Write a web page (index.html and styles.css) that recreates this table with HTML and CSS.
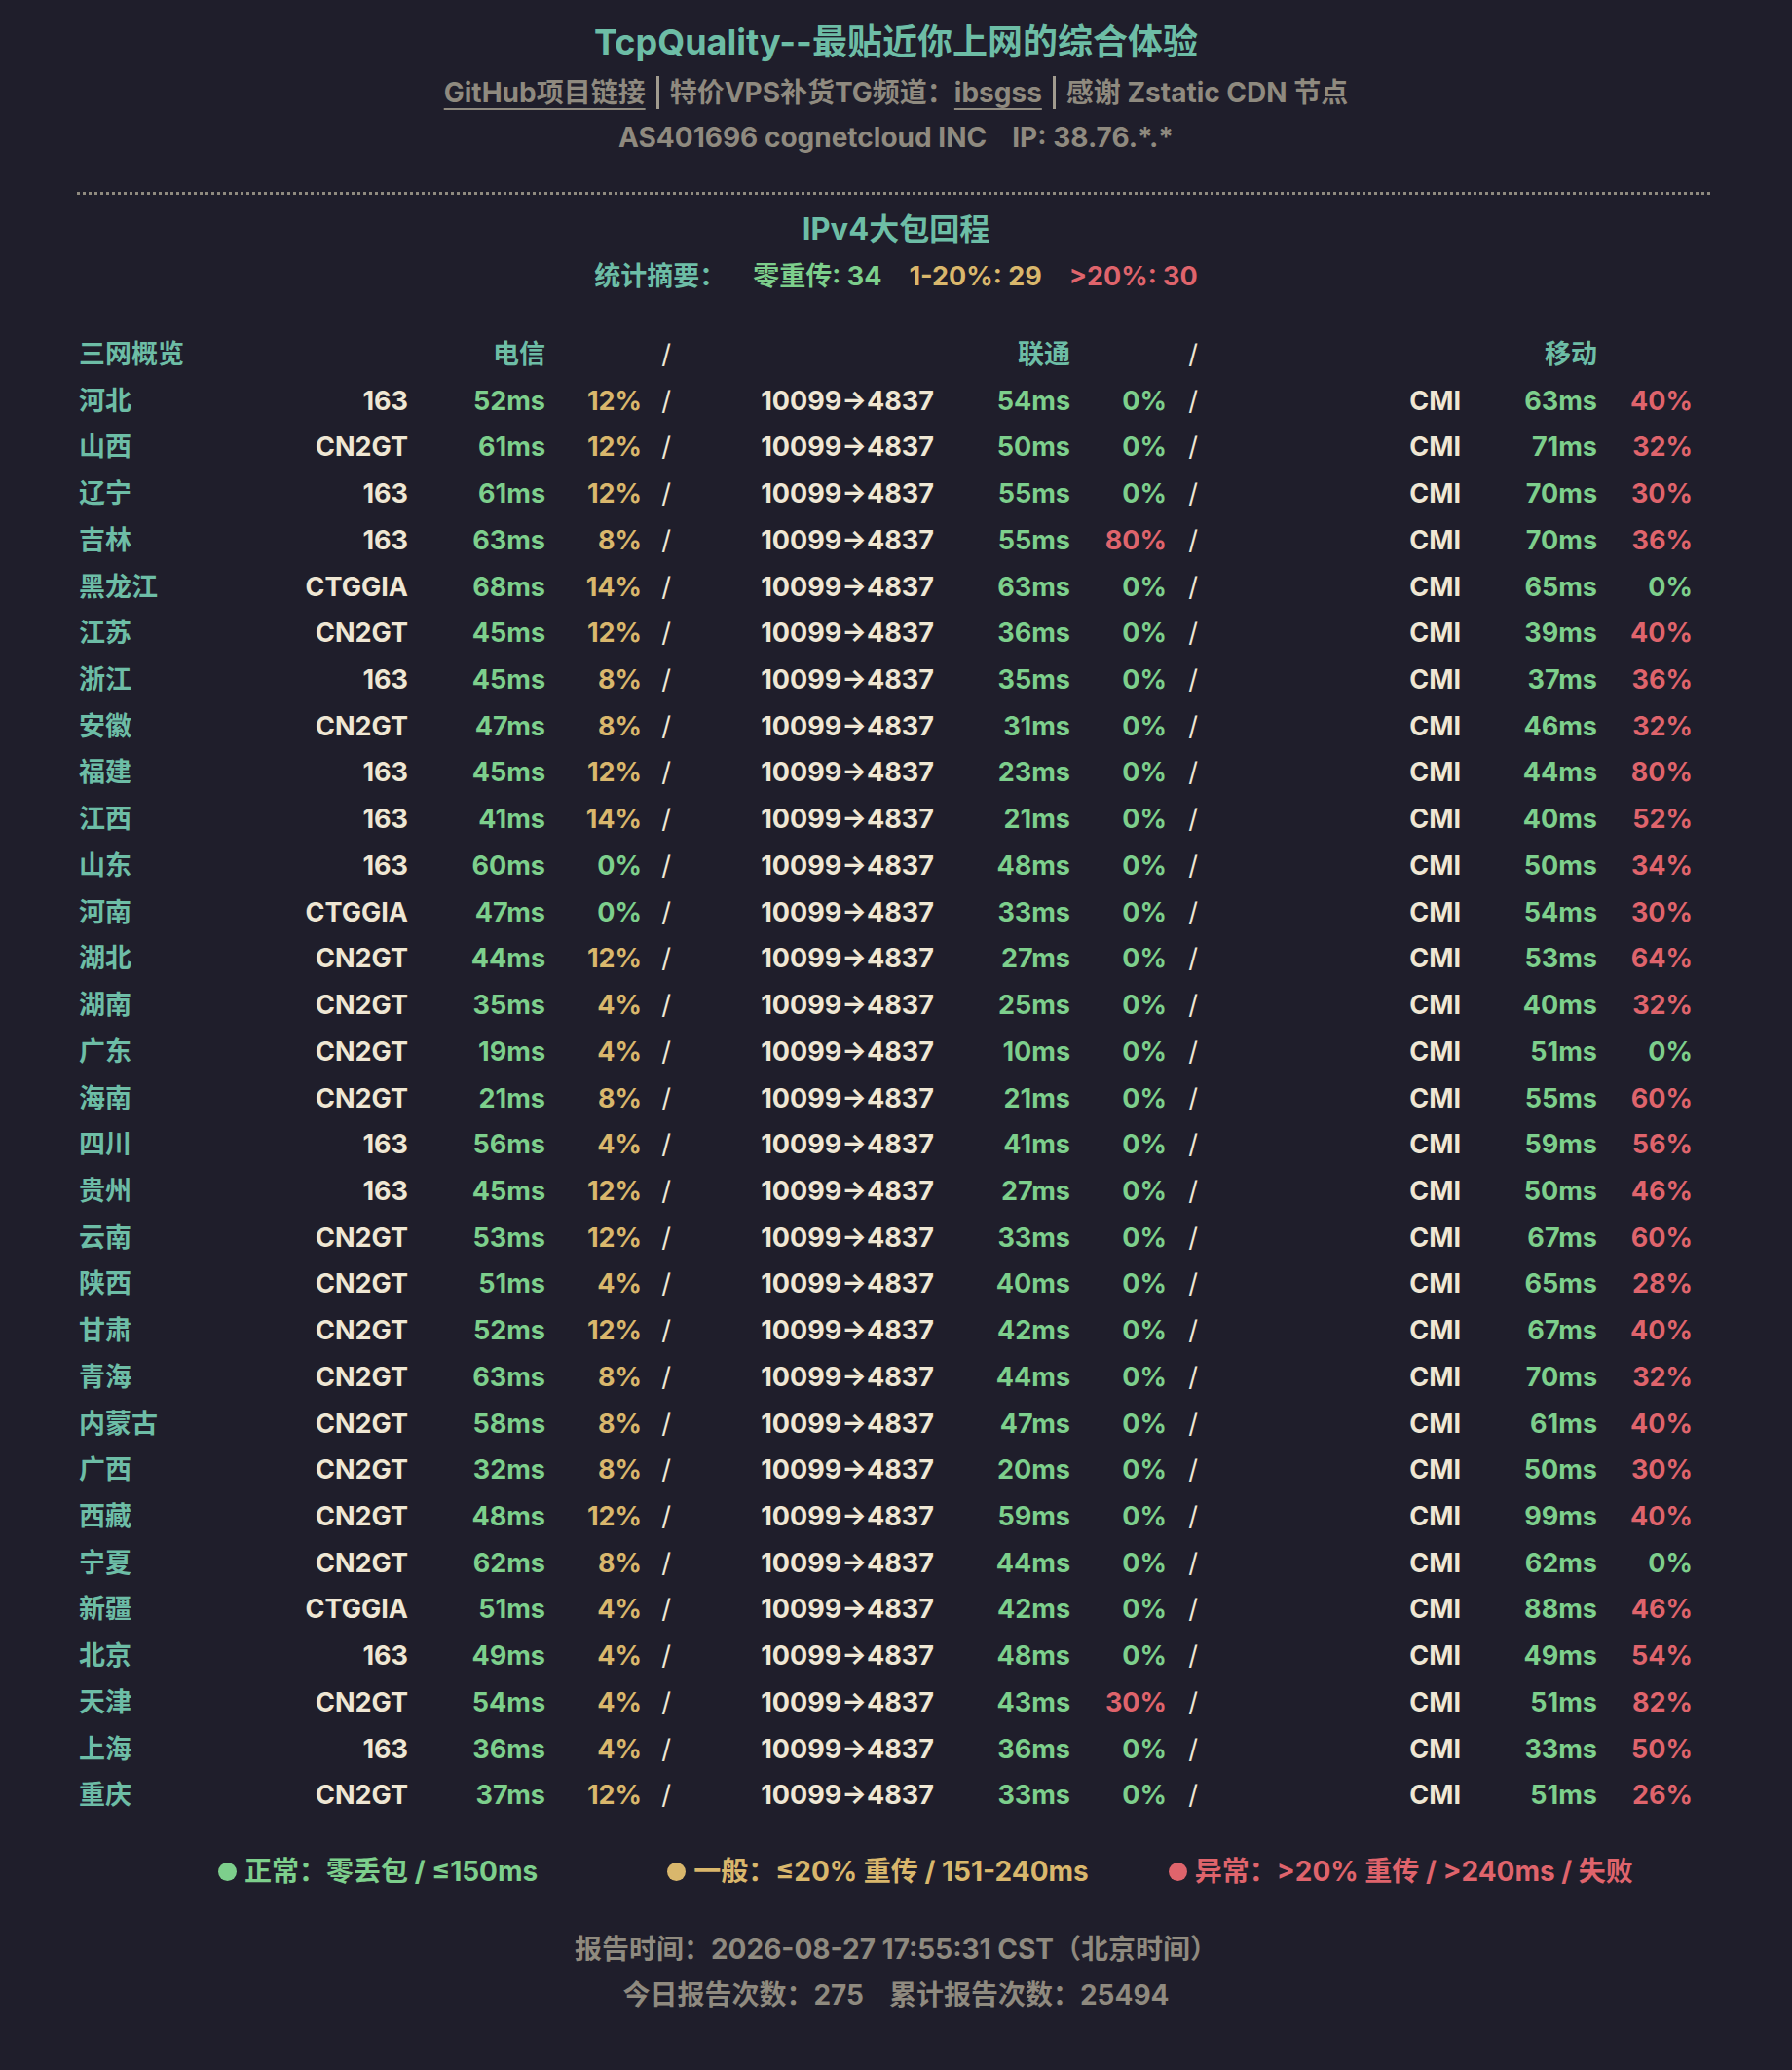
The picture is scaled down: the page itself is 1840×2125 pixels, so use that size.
FILE: index.html
```html
<!DOCTYPE html>
<html lang="zh-CN">
<head>
<meta charset="utf-8">
<title>TcpQuality</title>
<link rel="stylesheet" href="styles.css">
</head>
<body>
<div class="page">
  <header class="top">
    <h1 class="title">TcpQuality--最贴近你上网的综合体验</h1>
    <div class="links"><a class="lnk" href="#">GitHub项目链接</a><span class="bar"></span>特价VPS补货TG频道：<a class="lnk" href="#">ibsgss</a><span class="bar"></span>感谢 Zstatic CDN 节点</div>
    <div class="asn">AS401696 cognetcloud INC<span class="sp"></span>IP: 38.76.*.*</div>
  </header>
  <div class="sep"></div>
  <h2 class="sect">IPv4大包回程</h2>
  <div class="summary"><span class="t">统计摘要：</span><span class="g">零重传: 34</span><span class="y">1-20%: 29</span><span class="r">&gt;20%: 30</span></div>
  <div class="table" id="tbl">
    <div class="row head"><span class="name">三网概览</span><span></span><span class="hd">电信</span><span></span><span class="sl">/</span><span></span><span class="hd">联通</span><span></span><span class="sl">/</span><span></span><span class="hd">移动</span><span></span></div>
  </div>
  <div class="legend">
    <span class="li g"><i class="dot"></i>正常：零丢包 / ≤150ms</span>
    <span class="li y"><i class="dot"></i>一般：≤20% 重传 / 151-240ms</span>
    <span class="li r"><i class="dot"></i>异常：&gt;20% 重传 / &gt;240ms / 失败</span>
  </div>
  <footer class="foot">
    <div>报告时间：2026-08-27 17:55:31 CST（北京时间）</div>
    <div>今日报告次数：275<span class="sp2"></span>累计报告次数：25494</div>
  </footer>
</div>
<script src="app.js"></script>
</body>
</html>
```
FILE: app.js
```js
const data = [
["河北","163","52ms","12%","54ms","0%","63ms","40%"],
["山西","CN2GT","61ms","12%","50ms","0%","71ms","32%"],
["辽宁","163","61ms","12%","55ms","0%","70ms","30%"],
["吉林","163","63ms","8%","55ms","80%","70ms","36%"],
["黑龙江","CTGGIA","68ms","14%","63ms","0%","65ms","0%"],
["江苏","CN2GT","45ms","12%","36ms","0%","39ms","40%"],
["浙江","163","45ms","8%","35ms","0%","37ms","36%"],
["安徽","CN2GT","47ms","8%","31ms","0%","46ms","32%"],
["福建","163","45ms","12%","23ms","0%","44ms","80%"],
["江西","163","41ms","14%","21ms","0%","40ms","52%"],
["山东","163","60ms","0%","48ms","0%","50ms","34%"],
["河南","CTGGIA","47ms","0%","33ms","0%","54ms","30%"],
["湖北","CN2GT","44ms","12%","27ms","0%","53ms","64%"],
["湖南","CN2GT","35ms","4%","25ms","0%","40ms","32%"],
["广东","CN2GT","19ms","4%","10ms","0%","51ms","0%"],
["海南","CN2GT","21ms","8%","21ms","0%","55ms","60%"],
["四川","163","56ms","4%","41ms","0%","59ms","56%"],
["贵州","163","45ms","12%","27ms","0%","50ms","46%"],
["云南","CN2GT","53ms","12%","33ms","0%","67ms","60%"],
["陕西","CN2GT","51ms","4%","40ms","0%","65ms","28%"],
["甘肃","CN2GT","52ms","12%","42ms","0%","67ms","40%"],
["青海","CN2GT","63ms","8%","44ms","0%","70ms","32%"],
["内蒙古","CN2GT","58ms","8%","47ms","0%","61ms","40%"],
["广西","CN2GT","32ms","8%","20ms","0%","50ms","30%"],
["西藏","CN2GT","48ms","12%","59ms","0%","99ms","40%"],
["宁夏","CN2GT","62ms","8%","44ms","0%","62ms","0%"],
["新疆","CTGGIA","51ms","4%","42ms","0%","88ms","46%"],
["北京","163","49ms","4%","48ms","0%","49ms","54%"],
["天津","CN2GT","54ms","4%","43ms","30%","51ms","82%"],
["上海","163","36ms","4%","36ms","0%","33ms","50%"],
["重庆","CN2GT","37ms","12%","33ms","0%","51ms","26%"]
];
function cls(p){const v=parseInt(p,10);if(v===0)return"g";if(v<=20)return"y";return"r";}
const tbl=document.getElementById("tbl");
for(const d of data){
  const row=document.createElement("div");
  row.className="row";
  const cells=[
    ["name",d[0]],["isp",d[1]],["g",d[2]],[cls(d[3]),d[3]],["sl","/"],
    ["isp","10099→4837"],["g",d[4]],[cls(d[5]),d[5]],["sl","/"],
    ["isp","CMI"],["g",d[6]],[cls(d[7]),d[7]]
  ];
  for(const [c,t] of cells){const s=document.createElement("span");s.className=c;s.textContent=t;row.appendChild(s);}
  tbl.appendChild(row);
}
```
FILE: styles.css
```css
html, body {
  margin: 0;
  padding: 0;
  background: #1f1e2b;
}
body {
  font-family: "Inter", "Noto Sans CJK SC", sans-serif;
  font-weight: 700;
  color: #8f8a7f;
}
.page {
  width: 1682px;
  margin: 0 auto;
  padding-top: 18px;
  height: 2107px;
}
.top { text-align: center; }
.title {
  margin: 0;
  font-size: 36px;
  line-height: 50px;
  font-weight: 700;
  color: #6dbda6;
}
.links {
  font-size: 28px;
  line-height: 54px;
  color: #8f8a7f;
}
.lnk {
  color: #8f8a7f;
  text-decoration: underline;
  text-underline-offset: 6px;
  text-decoration-thickness: 2px;
}
.bar {
  display: inline-block;
  width: 3px;
  height: 34px;
  background: #a19b8f;
  vertical-align: -7px;
  margin: 0 11px;
}
.asn {
  font-size: 28px;
  line-height: 38px;
}
.sp { display: inline-block; width: 26px; }
.sep {
  margin-top: 37px;
  margin-right: 5px;
  border-top: 3px dotted #8f8a7f;
}
.sect {
  margin: 13px 0 0;
  font-size: 31px;
  line-height: 44px;
  font-weight: 700;
  text-align: center;
  color: #6dbda6;
}
.summary {
  margin-top: 7px;
  font-size: 27px;
  line-height: 40px;
  text-align: center;
  display: flex;
  justify-content: center;
  gap: 28px;
}
.summary .t { color: #6dbda6; }
.g { color: #7dcf8c; }
.y { color: #d9b76c; }
.r { color: #df646c; }
.table {
  margin-top: 36px;
  padding-left: 2px;
  font-size: 27px;
}
.row {
  display: grid;
  grid-template-columns: 198px 140px 141px 99px 50px 250px 140px 99px 54px 248px 140px 98px;
  height: 47.73px;
  line-height: 47.73px;
  text-align: right;
  white-space: nowrap;
}
.row .name { text-align: left; color: #6dbda6; }
.row .hd { color: #6dbda6; }
.row .isp { color: #efe7d4; }
.row .sl { color: #efe7d4; text-align: center; font-weight: 400; }
.legend {
  margin-top: 34px;
  display: flex;
  padding-left: 145px;
  font-size: 28px;
  line-height: 40px;
}
.li { display: flex; align-items: center; }
.li.g { margin-right: 133px; }
.li.y { margin-right: 82px; }
.dot {
  display: inline-block;
  width: 19px;
  height: 19px;
  border-radius: 50%;
  background: currentColor;
  margin-right: 8px;
}
.foot {
  margin-top: 37px;
  text-align: center;
  font-size: 28px;
  line-height: 47px;
}
.sp2 { display: inline-block; width: 26px; }
```
